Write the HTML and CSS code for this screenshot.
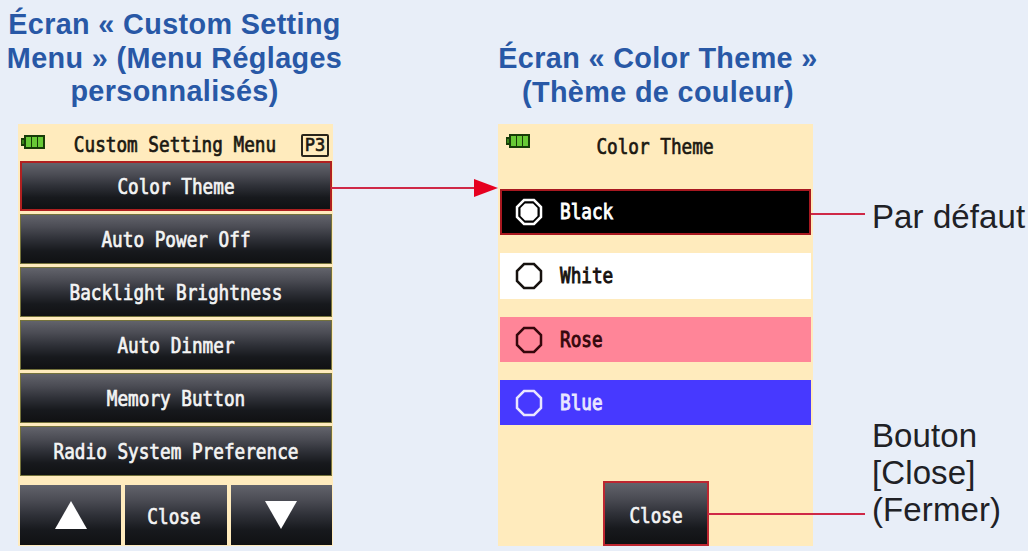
FILE: index.html
```html
<!DOCTYPE html>
<html lang="fr">
<head>
    <meta charset="UTF-8">
    <meta name="viewport" content="width=device-width, initial-scale=1.0">
    <title>Color Theme</title>
    <link rel="stylesheet" href="styles.css">
</head>
<body>
    <div class="figure">
        <section class="column">
            <h2>Écran « Custom Setting<br>Menu » (Menu Réglages<br>personnalisés)</h2>
            <div class="screen menu-screen">
                <div class="title-bar">
                    <svg class="battery" viewBox="0 0 26 16">
                        <path d="M4 1H25V15H4V12H1V4H4Z" fill="#173c08"/>
                        <path d="M6 3H11V13H6ZM12 3H17V13H12ZM18 3H23V13H18Z" fill="#68c936"/>
                        <path d="M2 6H4V10H2Z" fill="#398319"/>
                    </svg>
                    <span class="lcd">Custom Setting Menu</span>
                    <span class="page-badge"><span class="lcd">P3</span></span>
                </div>
                <div class="menu">
                    <div class="button selected"><span class="lcd">Color Theme</span></div>
                    <div class="button"><span class="lcd">Auto Power Off</span></div>
                    <div class="button"><span class="lcd">Backlight Brightness</span></div>
                    <div class="button"><span class="lcd">Auto Dinmer</span></div>
                    <div class="button"><span class="lcd">Memory Button</span></div>
                    <div class="button"><span class="lcd">Radio System Preference</span></div>
                </div>
                <div class="nav">
                    <div class="button"><svg class="triangle" viewBox="0 0 32 28"><path d="M16 0L32 28H0Z"/></svg></div>
                    <div class="button"><span class="lcd">Close</span></div>
                    <div class="button"><svg class="triangle" viewBox="0 0 32 28"><path d="M0 0H32L16 28Z"/></svg></div>
                </div>
            </div>
        </section>

        <section class="column theme-column">
            <h2>Écran « Color Theme »<br>(Thème de couleur)</h2>
            <div class="screen theme-screen">
                <div class="title-bar">
                    <svg class="battery" viewBox="0 0 26 16">
                        <path d="M4 1H25V15H4V12H1V4H4Z" fill="#173c08"/>
                        <path d="M6 3H11V13H6ZM12 3H17V13H12ZM18 3H23V13H18Z" fill="#68c936"/>
                        <path d="M2 6H4V10H2Z" fill="#398319"/>
                    </svg>
                    <span class="lcd">Color Theme</span>
                </div>
                <div class="themes">
                    <div class="theme black">
                        <svg class="radio" viewBox="0 0 28 28">
                            <path class="ring" d="M9 2H19L26 9V19L19 26H9L2 19V9Z"/>
                            <path class="dot" d="M10 5.500H18L22.500 10V18L18 22.500H10L5.500 18V10Z"/>
                        </svg>
                        <span class="lcd">Black</span>
                    </div>
                    <div class="theme white">
                        <svg class="radio" viewBox="0 0 28 28"><path class="ring" d="M9 2H19L26 9V19L19 26H9L2 19V9Z"/></svg>
                        <span class="lcd">White</span>
                    </div>
                    <div class="theme rose">
                        <svg class="radio" viewBox="0 0 28 28"><path class="ring" d="M9 2H19L26 9V19L19 26H9L2 19V9Z"/></svg>
                        <span class="lcd">Rose</span>
                    </div>
                    <div class="theme blue">
                        <svg class="radio" viewBox="0 0 28 28"><path class="ring" d="M9 2H19L26 9V19L19 26H9L2 19V9Z"/></svg>
                        <span class="lcd">Blue</span>
                    </div>
                </div>
                <div class="button close"><span class="lcd">Close</span></div>
            </div>
        </section>

        <aside class="notes">
            <p>Par défaut</p>
            <p>Bouton<br>[Close]<br>(Fermer)</p>
        </aside>

        <!-- callout lines -->
        <svg class="callouts" viewBox="0 0 1028 551">
            <path d="M331 188H478M811 214H865M708 514H865"/>
            <path class="head" d="M474 179L498 188L474 197Z"/>
        </svg>
    </div>
</body>
</html>
```

FILE: styles.css
```css
body {
    margin: 0;
    background: #e8eef8;
    font-family: "Liberation Sans", Arial, sans-serif;
}
.figure {
    position: relative;
    display: grid;
    grid-template-columns: 349px 480px 1fr;
    height: 551px;
    overflow: hidden;
}
.theme-column {
    padding-left: 138px;
}
h2 {
    box-sizing: border-box;
    height: 124px;
    margin: 0;
    padding-top: 8px;
    color: #2858a6;
    font-size: 28.8px;
    line-height: 33.5px;
    letter-spacing: 0.35px;
    text-align: center;
    white-space: nowrap;
}
.theme-column h2 {
    padding-top: 42px;
}
.screen {
    box-sizing: border-box;
    width: 315px;
    height: 422px;
    background: #ffebbd;
}
.menu-screen {
    margin-left: 18px;
    padding: 0 1px 0 2px;
}
.theme-screen {
    margin-left: 11px;
    padding: 0 2px;
}
.lcd {
    display: inline-block;
    font-family: "DejaVu Sans Mono", monospace;
    font-size: 17.7px;
    line-height: 20px;
    white-space: pre;
    transform: scaleY(1.15);
    -webkit-text-stroke: 0.6px currentColor;
}
.title-bar {
    display: grid;
    grid-template-columns: 29px 1fr 28px;
    align-items: center;
    box-sizing: border-box;
    height: 37px;
    padding: 5px 3px 0 0;
    color: #1b1811;
    text-align: center;
}
.battery {
    width: 26px;
    height: 16px;
    margin-top: -7px;
}
.theme-screen .title-bar {
    grid-template-columns: 26px 1fr 32px;
    height: 65px;
    padding: 0 0 20px 5px;
}
.theme-screen .battery {
    margin-top: -12px;
}
.page-badge {
    display: flex;
    align-items: center;
    justify-content: center;
    box-sizing: border-box;
    height: 23px;
    border: 2px solid #29251b;
    border-radius: 2px;
}
.page-badge .lcd {
    font-size: 17px;
    transform: scaleY(1.05);
}
.menu {
    display: grid;
    grid-template-rows: repeat(6, 50px);
    row-gap: 3px;
}
.button {
    display: flex;
    align-items: center;
    justify-content: center;
    box-sizing: border-box;
    background: linear-gradient(#62636b 0%, #4b4c54 25%, #2f3138 50%, #17191d 75%, #101113 100%);
    color: #f4f4f4;
}
.menu .button {
    padding-top: 2px;
    border: 1px solid #74723b;
}
.menu .selected {
    border: 2px solid #b02020;
}
.nav {
    display: grid;
    grid-template-columns: repeat(3, 1fr);
    column-gap: 4px;
    height: 60px;
    margin-top: 9px;
}
.nav .lcd {
    margin: 4px 4px 0 0;
}
.triangle {
    width: 32px;
    height: 28px;
    fill: #fff;
}
.themes {
    display: grid;
    grid-template-rows: 46px 46px 45px 45px;
    row-gap: 18px;
}
.theme {
    display: flex;
    align-items: center;
    gap: 17px;
    box-sizing: border-box;
    padding-left: 15px;
    color: #17120f;
}
.theme .lcd {
    -webkit-text-stroke-width: 0.8px;
}
.black {
    padding-left: 13px;
    border: 2px solid #a81820;
    background: #000;
    color: #fff;
}
.white {
    background: #fff;
}
.rose {
    background: #ff8598;
    color: #35070c;
}
.blue {
    background: #4739ff;
    color: #e9e6ff;
}
.radio {
    width: 28px;
    height: 28px;
}
.ring {
    fill: none;
    stroke: currentColor;
    stroke-width: 2.5;
}
.dot {
    fill: currentColor;
}
.close {
    width: 106px;
    height: 65px;
    margin: 56px 0 0 103px;
    padding-top: 5px;
    border: 2px solid #bd2630;
}
.notes {
    padding-left: 43px;
    color: #202126;
    font-size: 33px;
    line-height: 37px;
    letter-spacing: 0.1px;
    white-space: nowrap;
}
.notes p {
    margin: 0;
}
.notes p:first-child {
    padding-top: 198px;
    margin-bottom: 182px;
}
.callouts {
    position: absolute;
    inset: 0;
    width: 1028px;
    height: 551px;
    fill: none;
    stroke: #cf2847;
    stroke-width: 2;
}
.callouts .head {
    fill: #e60020;
    stroke: none;
}
```
